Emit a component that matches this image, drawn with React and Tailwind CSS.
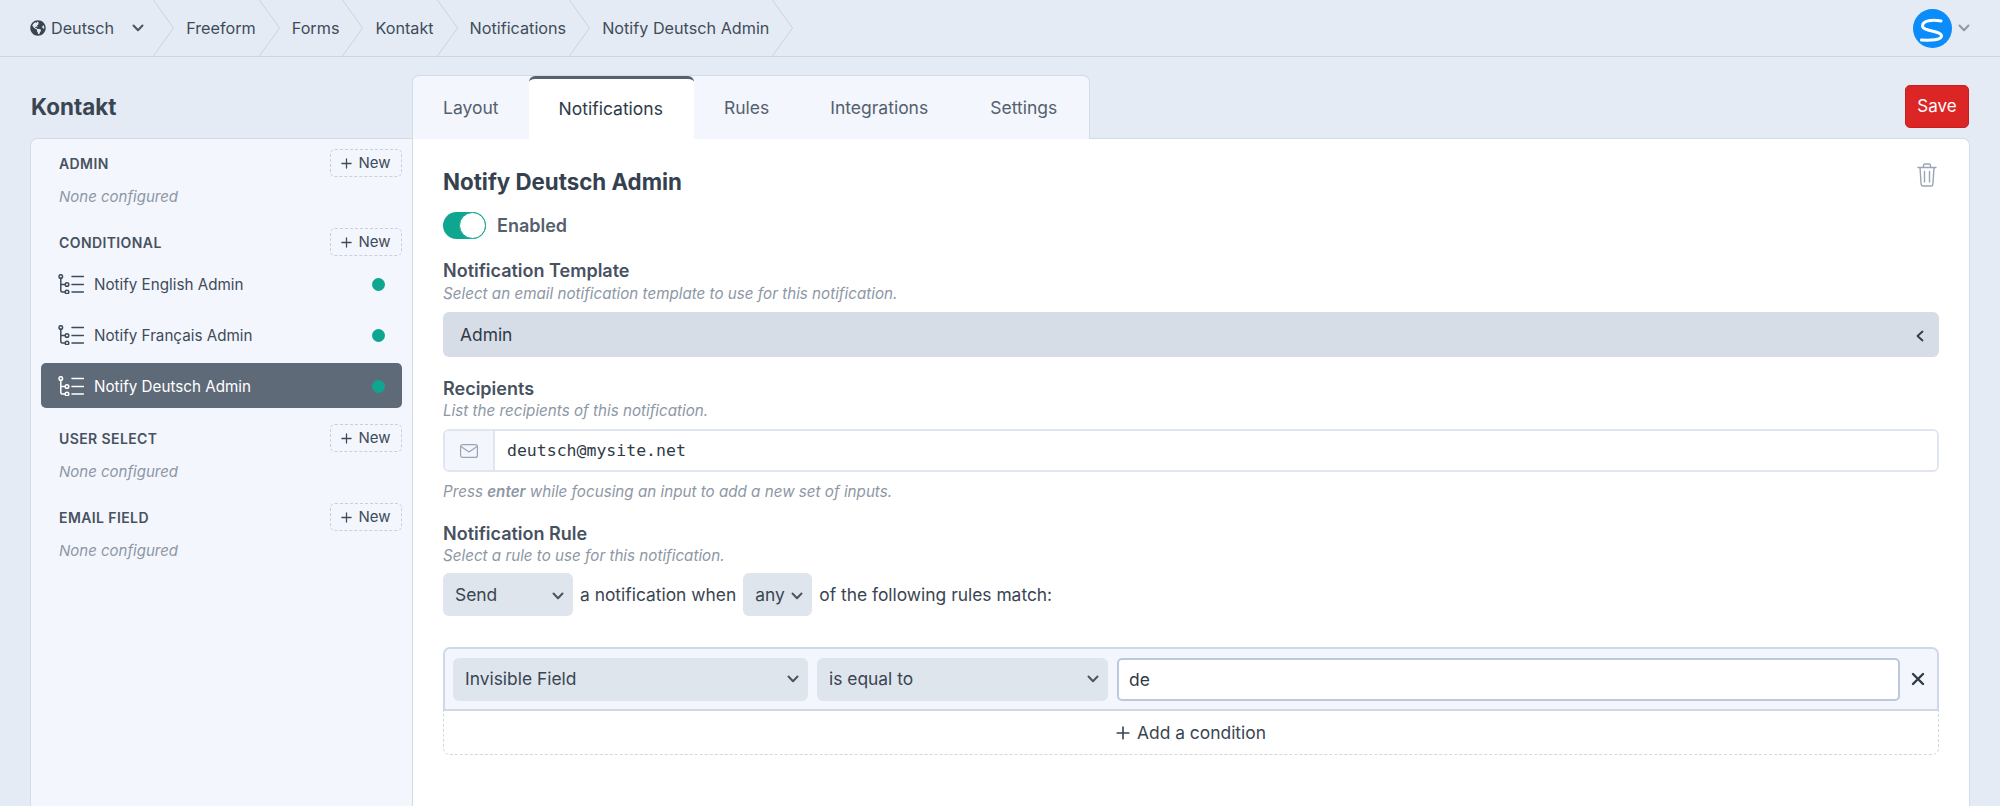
import React from 'react';
import { FaGlobeAmericas } from 'react-icons/fa';

const INTER = 'font-["Inter","Noto_Sans",sans-serif]';

const Chevron = ({ className }) => (
  <svg viewBox="0 0 12 8" className={className} fill="none" stroke="currentColor" strokeWidth="2" strokeLinecap="round" strokeLinejoin="round">
    <path d="M1.5 1.5 6 6.2l4.5-4.7" />
  </svg>
);

const CrumbSep = () => (
  <svg viewBox="0 0 21 56" className="w-[21px] h-[56px] shrink-0" fill="none" stroke="#c9d2e3" strokeWidth="1">
    <path d="M0.5 0 20.5 28 0.5 56" />
  </svg>
);

const Crumb = ({ label }) => (
  <div className="flex items-center h-[56px] -ml-px">
    <span className="ml-[13px] mr-[3px]">{label}</span>
    <CrumbSep />
  </div>
);

const TreeIcon = ({ color }) => (
  <svg viewBox="0 0 26 20" className="w-[26px] h-[20px] shrink-0" fill="none" stroke={color} strokeWidth="1.5" strokeLinecap="round">
    <circle cx="2.8" cy="2.5" r="1.8" />
    <circle cx="9" cy="10.5" r="1.8" />
    <circle cx="9" cy="18" r="1.8" />
    <path d="M2.8 4.3V16.5a1.5 1.5 0 0 0 1.5 1.5H7.2M2.8 10.5H7.2" />
    <path d="M14 2.5H25.5M14 10.5H25.5M14 18H25.5" />
  </svg>
);

const Plus = ({ className }) => (
  <svg viewBox="0 0 12 12" className={className} fill="none" stroke="currentColor" strokeWidth="1.4" strokeLinecap="round">
    <path d="M6 1v10M1 6h10" />
  </svg>
);

const SectionHead = ({ title, className = '' }) => (
  <div className={`flex items-center justify-between h-[28px] pl-[18px] ${className}`}>
    <span className="text-[14px] font-semibold tracking-[0.4px] text-[#47525f]">{title}</span>
    <button className="flex items-center justify-center gap-[6px] w-[72px] h-[28px] rounded-[5px] border border-dashed border-[#c8d0de] text-[15px] text-[#3f4b59]">
      <Plus className="w-[11px] h-[11px]" />
      New
    </button>
  </div>
);

const NoneConfigured = () => (
  <div className="mt-[10px] h-[20px] pl-[18px] text-[15px] leading-[20px] italic text-[#8d97a5]">None configured</div>
);

const NotifyItem = ({ label, active }) => (
  <div className={`flex items-center h-[45px] rounded-[5px] pl-[17px] pr-[17px] text-[15.2px] ${active ? 'bg-[#5f6a79] text-white' : 'text-[#3f4b59]'}`}>
    <TreeIcon color={active ? '#ffffff' : '#3f4b59'} />
    <span className="ml-[10px] pt-[3px]">{label}</span>
    <span className="ml-auto mt-[1px] w-[13px] h-[13px] rounded-full bg-[#0fa68f]" />
  </div>
);

const FieldLabel = ({ children, className = '' }) => (
  <div className={`h-[24px] leading-[24px] text-[18px] font-semibold text-[#47525f] ${className}`}>{children}</div>
);

const Help = ({ children, className = '' }) => (
  <div className={`h-[20px] leading-[20px] text-[15.2px] italic text-[#8d97a5] ${className}`}>{children}</div>
);

const FakeSelect = ({ label, className = '' }) => (
  <div className={`flex items-center justify-between h-[43px] rounded-[6px] bg-[#dfe5ed] pl-[12px] pr-[9px] text-[17.4px] text-[#3a4552] ${className}`}>
    <span>{label}</span>
    <Chevron className="w-[12px] h-[8px] text-[#4a5563]" />
  </div>
);

const tabs = [
  { label: 'Layout', cls: 'flex items-center pl-[30px] pr-[30px] pt-[2px]' },
  { label: 'Notifications', cls: 'flex items-center pl-[30px] pr-[31px] pt-[1px] bg-white text-[#2f3a47] rounded-t-[6px] border-t-[3px] border-[#56606e]' },
  { label: 'Rules', cls: 'flex items-center px-[30px] pt-[2px]' },
  { label: 'Integrations', cls: 'flex items-center px-[31px] pt-[2px]' },
  { label: 'Settings', cls: 'flex items-center pl-[31px] pr-[32px] pt-[2px]' },
];

export default function App() {
  return (
    <div className={`${INTER} w-[2000px] h-[806px] overflow-hidden bg-[#e5ebf5] text-[#3f4b59]`}>
      {/* top bar */}
      <header className="flex items-center h-[57px] border-b border-[#cdd5e3] pr-[30px] text-[16.2px] text-[#3f4b59]">
        <div className="flex items-center h-[56px]">
          <FaGlobeAmericas className="ml-[30px] w-[16px] h-[16px] text-[#3a4552]" />
          <span className="ml-[5px]">Deutsch</span>
          <Chevron className="ml-[18px] w-[12px] h-[8px] text-[#4a5563]" />
          <span className="w-[9px]" />
          <CrumbSep />
        </div>
        <Crumb label="Freeform" />
        <Crumb label="Forms" />
        <Crumb label="Kontakt" />
        <Crumb label="Notifications" />
        <Crumb label="Notify Deutsch Admin" />
        <div className="ml-auto flex items-center gap-[6px]">
          <svg viewBox="0 0 39 39" className="w-[39px] h-[39px]">
            <circle cx="19.5" cy="19.5" r="19.5" fill="#0a8cfa" />
            <path d="M28 12C20 10.5 9.5 11 9.5 17C9.5 22.5 28.5 21.5 28.5 27C28.5 31 18 31.5 8.5 31" fill="none" stroke="#ffffff" strokeWidth="3" strokeLinecap="round" />
          </svg>
          <Chevron className="w-[12px] h-[8px] text-[#8d97a5]" />
        </div>
      </header>

      {/* title, tabs and save */}
      <div className="flex items-center h-[81px] pt-[18px] pl-[30px] pr-[31px]">
        <h1 className="w-[382px] pl-px text-[22.4px] font-bold text-[#3a4552]">Kontakt</h1>
        <nav className="relative z-10 flex items-stretch h-[64px] -mb-[1px] self-end rounded-t-[7px] border border-b-0 border-[#d3daea] bg-[#f3f6fd] text-[17.5px] text-[#55606e]">
          {tabs.map(t => (
            <div key={t.label} className={t.cls}>{t.label}</div>
          ))}
        </nav>
        <button className="ml-auto h-[43px] w-[64px] rounded-[5px] border border-[#c81e1e] bg-[#dc2626] text-[17px] text-white">Save</button>
      </div>

      {/* panels */}
      <div className="flex h-[668px] pl-[30px] pr-[30px]">
        <aside className="w-[382px] shrink-0 rounded-tl-[7px] border-t border-l border-[#d3daea] bg-[#f3f6fd] pt-[10px] pl-[10px] pr-[10px]">
          <SectionHead title="ADMIN" />
          <NoneConfigured />
          <SectionHead title="CONDITIONAL" className="mt-[21px]" />
          <div className="mt-[5px] flex flex-col gap-[6px]">
            <NotifyItem label="Notify English Admin" />
            <NotifyItem label="Notify Français Admin" />
            <NotifyItem label="Notify Deutsch Admin" active />
          </div>
          <SectionHead title="USER SELECT" className="mt-[16px]" />
          <NoneConfigured />
          <SectionHead title="EMAIL FIELD" className="mt-[21px]" />
          <NoneConfigured />
        </aside>

        <main className="flex-1 rounded-tr-[7px] border border-b-0 border-[#d3daea] bg-white pl-[30px] pr-[30px] pt-[29px]">
          <div className="flex items-start justify-between">
            <h2 className="h-[28px] leading-[28px] text-[22.3px] font-bold text-[#35414f]">Notify Deutsch Admin</h2>
            <svg viewBox="0 0 20 24" className="w-[20px] h-[24px] -mt-[5px] mr-[2px]" fill="none" stroke="#9aa5b4" strokeWidth="1.4" strokeLinecap="round" strokeLinejoin="round">
              <path d="M1 4.5h18M6.5 4.5V2.6C6.5 1.7 7.2 1 8.1 1h3.8c.9 0 1.6.7 1.6 1.6v1.9M3 4.5l1.1 16.6c.1 1 .9 1.9 2 1.9h7.8c1.1 0 1.9-.9 2-1.9L17 4.5M7.5 8.5v10.5M12.5 8.5v10.5" />
            </svg>
          </div>

          <div className="mt-[16px] flex items-center h-[27px]">
            <div className="flex justify-end w-[43px] h-[27px] rounded-full bg-[#0fa68f]">
              <span className="w-[27px] h-[27px] rounded-full bg-white border border-[#0fa68f]" />
            </div>
            <span className="ml-[11px] text-[18px] font-semibold text-[#55606e]">Enabled</span>
          </div>

          <FieldLabel className="mt-[20px]">Notification Template</FieldLabel>
          <Help className="mt-px">Select an email notification template to use for this notification.</Help>
          <div className="mt-[8px] flex items-center justify-between h-[45px] pt-[2px] rounded-[6px] bg-[#d6dde7] pl-[17px] pr-[15px] text-[17.4px] text-[#2f3a47]">
            <span>Admin</span>
            <svg viewBox="0 0 8 12" className="w-[8px] h-[12px]" fill="none" stroke="#2f3a47" strokeWidth="1.8" strokeLinecap="round" strokeLinejoin="round">
              <path d="M6.5 1.5 1.5 6l5 4.5" />
            </svg>
          </div>

          <FieldLabel className="mt-[20px]">Recipients</FieldLabel>
          <Help>List the recipients of this notification.</Help>
          <div className="mt-[8px] flex h-[43px] rounded-[6px] border-2 border-[#e0e6f0] overflow-hidden">
            <div className="flex items-center justify-center w-[50px] border-r-2 border-[#e0e6f0] bg-[#f3f6fd]">
              <svg viewBox="0 0 18 14" className="w-[18px] h-[14px]" fill="none" stroke="#9aa5b4" strokeWidth="1.2" strokeLinejoin="round">
                <rect x="0.6" y="0.6" width="16.8" height="12.8" rx="2" />
                <path d="M1 2.5 9 8l8-5.5" />
              </svg>
            </div>
            <input
              readOnly
              defaultValue="deutsch@mysite.net"
              className={'flex-1 pl-[12px] pt-[2px] outline-none bg-white text-[16.5px] text-[#2f3a47] font-["DejaVu_Sans_Mono",monospace]'}
            />
          </div>
          <Help className="mt-[10px]">Press <b className="font-semibold">enter</b> while focusing an input to add a new set of inputs.</Help>

          <FieldLabel className="mt-[20px]">Notification Rule</FieldLabel>
          <Help>Select a rule to use for this notification.</Help>
          <div className="mt-[7px] flex items-center h-[43px] text-[17.4px] text-[#3a4552]">
            <FakeSelect label="Send" className="w-[130px] pt-[2px]" />
            <span className="ml-[7px] mt-[2px]">a notification when</span>
            <FakeSelect label="any" className="ml-[7px] w-[69px] pt-[2px]" />
            <span className="ml-[7px] mt-[2px]">of the following rules match:</span>
          </div>

          <div className="mt-[31px]">
            <div className="flex items-center gap-[9px] h-[64px] rounded-t-[7px] border-2 border-b-2 border-[#cfd8e6] bg-[#f3f6fd] pl-[8px] pr-[12px]">
              <FakeSelect label="Invisible Field" className="w-[355px]" />
              <FakeSelect label="is equal to" className="w-[291px]" />
              <input
                readOnly
                defaultValue="de"
                className="flex-1 min-w-0 h-[43px] rounded-[5px] border-2 border-[#bcc8dc] bg-white pl-[10px] text-[17.4px] text-[#2f3a47] outline-none"
              />
              <svg viewBox="0 0 14 14" className="ml-[2px] w-[14px] h-[14px] shrink-0" fill="none" stroke="#2f3a47" strokeWidth="2.4" strokeLinecap="round">
                <path d="M2 2l10 10M12 2 2 12" />
              </svg>
            </div>
            <div className="flex items-center justify-center gap-[7px] h-[44px] pt-[1px] rounded-b-[7px] border border-t-0 border-dashed border-[#cfd8e6] text-[17.4px] text-[#3a4552]">
              <Plus className="w-[14px] h-[14px]" />
              Add a condition
            </div>
          </div>
        </main>
      </div>
    </div>
  );
}
